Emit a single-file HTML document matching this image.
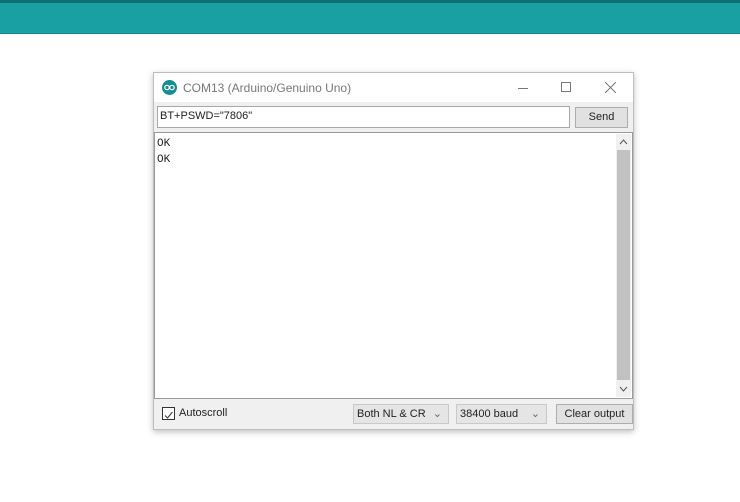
<!DOCTYPE html>
<html><head><style>
*{margin:0;padding:0;box-sizing:border-box}
body{width:740px;height:502px;background:#fff;position:relative;overflow:hidden;font-family:"Liberation Sans",sans-serif}
.top{position:absolute;left:0;top:0;width:740px;height:34px;background:#18a0a3;border-top:3px solid #0f6f72;border-bottom:1px solid #128a8d}
.win{position:absolute;left:153px;top:72px;width:481px;height:358px;background:#f0f0f0;border:1px solid #bdbdbd;box-shadow:0 2px 6px rgba(0,0,0,.25)}
.title{position:absolute;left:0;top:0;width:479px;height:29px;background:#fff}
.ttxt{position:absolute;left:29px;top:8px;font-size:12px;color:#777}
.logo{position:absolute;left:8px;top:7px;width:15px;height:15px;border-radius:50%;background:#158c91}
.abs{position:absolute}
.inp{position:absolute;left:3px;top:33px;width:413px;height:22px;background:#fff;border:1px solid #a8a8a8;font-size:11px;padding:3px 2px;color:#222}
.btn{position:absolute;background:#e1e1e1;border:1px solid #adadad;font-size:11px;color:#222;text-align:center}
.out{position:absolute;left:0;top:59px;width:479px;height:267px;background:#fff;border:1px solid #9a9a9a;font-family:"Liberation Mono",monospace;font-size:11px;line-height:16px;padding:3px 2px;color:#222}
.sb{position:absolute;right:1px;top:1px;width:15px;height:263px;background:#f0f0f0}
.thumb{position:absolute;left:1px;top:16px;width:13px;height:230px;background:#c1c1c1}
.sel{position:absolute;background:#e5e5e5;border:1px solid #c9c9c9;font-size:11px;color:#222;padding:3px 3px}
</style></head><body>
<div class="top"></div>
<div class="win">
 <div class="title">
  <div class="logo"><svg width="15" height="15"><circle cx="5" cy="7.5" r="2.2" fill="none" stroke="#fff" stroke-width="1.2"/><circle cx="10" cy="7.5" r="2.2" fill="none" stroke="#fff" stroke-width="1.2"/></svg></div>
  <div class="ttxt">COM13 (Arduino/Genuino Uno)</div>
  <div class="abs" style="left:364px;top:15px;width:10px;height:1px;background:#777"></div>
  <div class="abs" style="left:407px;top:9px;width:10px;height:10px;border:1px solid #777"></div>
  <svg class="abs" style="left:451px;top:9px" width="11" height="11"><path d="M0 0L11 11M11 0L0 11" stroke="#777" stroke-width="1"/></svg>
 </div>
 <div class="inp">BT+PSWD="7806"</div>
 <div class="btn" style="left:421px;top:34px;width:53px;height:21px;line-height:19px">Send</div>
 <div class="out">OK<br>OK
  <div class="sb"><div class="thumb"></div>
   <svg class="abs" style="left:3px;top:5px" width="9" height="6"><path d="M1 5L4.5 1L8 5" stroke="#555" fill="none"/></svg>
   <svg class="abs" style="left:3px;top:252px" width="9" height="6"><path d="M1 1L4.5 5L8 1" stroke="#555" fill="none"/></svg>
  </div>
 </div>
 <div class="abs" style="left:8px;top:334px;width:13px;height:13px;border:1px solid #333;background:#fff"><svg width="11" height="11"><path d="M2 5.5L4.5 8L9.5 2" stroke="#333" fill="none"/></svg></div>
 <div class="abs" style="left:25px;top:334px;font-size:11px;color:#222">Autoscroll</div>
 <div class="sel" style="left:199px;top:331px;width:96px;height:20px">Both NL &amp; CR<span style="position:absolute;right:6px;top:2px;color:#666">⌄</span></div>
 <div class="sel" style="left:302px;top:331px;width:91px;height:20px">38400 baud<span style="position:absolute;right:6px;top:2px;color:#666">⌄</span></div>
 <div class="btn" style="left:402px;top:331px;width:77px;height:20px;line-height:18px;font-size:11px">Clear output</div>
</div>
</body></html>
